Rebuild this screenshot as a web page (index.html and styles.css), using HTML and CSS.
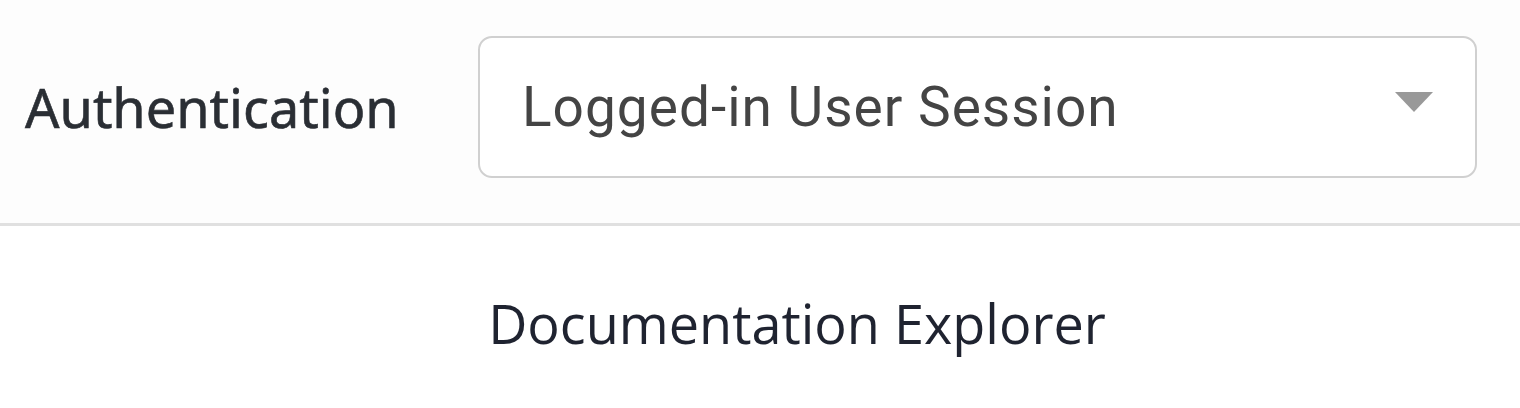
FILE: index.html
```html
<!DOCTYPE html>
<html lang="en">
<head>
    <meta charset="UTF-8">
    <title>Documentation Explorer</title>
    <link rel="stylesheet" href="styles.css">
</head>
<body>
<div class="auth-bar">
    <label for="authSelect" class="auth-label">Authentication</label>
    <div class="select-wrap">
        <select id="authSelect" class="auth-select">
            <option>Logged-in User Session</option>
            <option>API Key</option>
        </select>
        <span class="select-arrow"></span>
    </div>
</div>
<div class="doc-header">
    <h2 class="doc-title">Documentation Explorer</h2>
</div>
</body>
</html>
```

FILE: styles.css
```css
body {
    margin: 0;
    padding: 0;
    background-color: #fff;
    font-family: 'Noto Sans', sans-serif;
}

.auth-bar {
    display: flex;
    align-items: center;
    height: 226px;
    padding: 36px 43px 45px 25px;
    border-bottom: 3px solid #e0e0e0;
    background-color: #fdfdfd;
    box-sizing: border-box;
}

.auth-label {
    font-family: 'Noto Sans', sans-serif;
    font-weight: 400;
    font-size: 54px;
    color: #2a2e34;
    width: 453px;
    flex-shrink: 0;
    -webkit-text-stroke: 0.6px #2a2e34;
}

.select-wrap {
    position: relative;
    flex: 1;
}

.auth-select {
    display: block;
    width: 100%;
    height: 142px;
    padding: 0 100px 0 42px;
    border: 2.5px solid #d0d0d0;
    border-radius: 14px;
    background-color: #fff;
    font-family: Roboto, sans-serif;
    font-weight: 400;
    font-size: 55px;
    letter-spacing: 1px;
    color: #444;
    appearance: none;
    -webkit-appearance: none;
    box-sizing: border-box;
}

.select-arrow {
    position: absolute;
    top: 56px;
    right: 44px;
    width: 0;
    height: 0;
    border-left: 19px solid transparent;
    border-right: 19px solid transparent;
    border-top: 20px solid #999;
    pointer-events: none;
}

.doc-header {
    display: flex;
    justify-content: center;
    padding: 0 0 0 74px;
}

.doc-title {
    margin: 60px 0 0;
    font-family: 'Open Sans', sans-serif;
    font-weight: 500;
    font-size: 54px;
    color: #1f2330;
}
```
